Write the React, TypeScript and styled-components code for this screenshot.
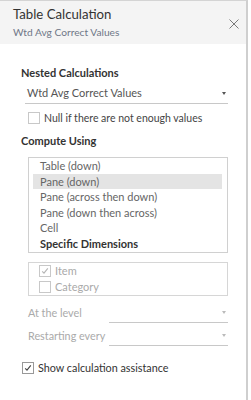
import React from "react";
import styled, { createGlobalStyle } from "styled-components";

const Global = createGlobalStyle`
  html, body { margin: 0; padding: 0; background: #fff; }
  body { font-family: Lato, "Noto Sans", sans-serif; }
`;

const Panel = styled.div`
  width: 248px;
  height: 400px;
  box-sizing: border-box;
  border-top: 1px solid #d4d4d4;
  border-right: 2px solid #cfcfcf;
  background: #fff;
  display: flex;
  flex-direction: column;
`;

const Header = styled.div`
  background: #f4f4f4;
  height: 43px;
  box-sizing: border-box;
  padding: 5px 7px 0 13px;
  display: flex;
  justify-content: space-between;
  align-items: flex-start;
`;

const Titles = styled.div`
  display: flex;
  flex-direction: column;
`;

const Title = styled.div`
  font-size: 13.2px;
  color: #333;
  line-height: 17px;
`;

const Subtitle = styled.div`
  font-size: 10.2px;
  color: #6f7787;
  line-height: 13px;
  margin-top: 3px;
`;

const Close = styled.div`
  margin-top: 7px;
  width: 10px;
  height: 10px;
`;

const Body = styled.div`
  padding: 22px 0 0 21px;
  display: flex;
  flex-direction: column;
`;

const SectionLabel = styled.div`
  font-size: 11px;
  font-weight: 700;
  color: #333;
  line-height: 14px;
`;

const Select = styled.div<{ $muted?: boolean }>`
  display: flex;
  justify-content: space-between;
  align-items: flex-start;
  border-bottom: 1px solid #c8c8c8;
  box-sizing: border-box;
  font-size: 11px;
  line-height: 14px;
  color: ${(p) => (p.$muted ? "#aaa" : "#555")};
  padding: 0 2px 0 2px;
`;

const Arrow = styled.span<{ $muted?: boolean }>`
  margin-top: 6px;
  width: 0;
  height: 0;
  border-left: 2.5px solid transparent;
  border-right: 2.5px solid transparent;
  border-top: 3px solid ${(p) => (p.$muted ? "#bbb" : "#555")};
`;

const NestedSelect = styled(Select)`
  margin: 6px 18px 0 4px;
  height: 18px;
`;

const CheckRow = styled.label<{ $muted?: boolean }>`
  display: flex;
  align-items: center;
  gap: 4px;
  height: 16px;
  font-size: 10.5px;
  color: ${(p) => (p.$muted ? "#aaa" : "#444")};
  line-height: 16px;
  white-space: nowrap;
`;

const Box = styled.span<{ $muted?: boolean }>`
  width: 10px;
  height: 10px;
  border: 1px solid ${(p) => (p.$muted ? "#c8c8c8" : "#999")};
  background: #fff;
  display: inline-flex;
  align-items: center;
  justify-content: center;
  flex: none;
`;

const NullRow = styled(CheckRow)`
  margin: 6px 0 0 7px;
`;

const ComputeLabel = styled(SectionLabel)`
  margin-top: 8px;
`;

const ListBox = styled.div`
  margin: 9px 18px 0 7px;
  border: 1px solid #d0d0d0;
  padding: 0 5px 0 4px;
  display: flex;
  flex-direction: column;
`;

const ListItem = styled.div<{ $selected?: boolean; $bold?: boolean }>`
  height: 15.6px;
  line-height: 15.6px;
  font-size: 11px;
  padding-left: 7px;
  white-space: nowrap;
  color: ${(p) => (p.$bold ? "#333" : "#666")};
  font-weight: ${(p) => (p.$bold ? 700 : 400)};
  background: ${(p) => (p.$selected ? "#e4e4e4" : "transparent")};
`;

const DimBox = styled.div`
  margin: 9px 18px 0 7px;
  border: 1px solid #d6d6d6;
  padding: 0 0 0 10px;
  display: flex;
  flex-direction: column;
`;

const DimRow = styled(CheckRow)`
  font-size: 11px;
`;

const LevelRow = styled.div<{ $gap: number }>`
  margin: ${(p) => p.$gap}px 18px 0 7px;
  display: flex;
  align-items: flex-start;
  height: 18px;
`;

const LevelLabel = styled.div`
  width: 81px;
  font-size: 10.8px;
  color: #aaa;
  line-height: 16px;
  white-space: nowrap;
`;

const LevelSelect = styled(Select)`
  flex: 1;
  height: 18px;
`;

const AssistRow = styled(CheckRow)`
  margin: 14px 0 0 1px;
  font-size: 10.8px;
  color: #333;
`;

const Check = ({ muted }: { muted?: boolean }) => (
  <svg width="8" height="8" viewBox="0 0 8 8">
    <path
      d="M1.2 4.3 L3 6.2 L6.8 1.4"
      fill="none"
      stroke={muted ? "#b5b5b5" : "#444"}
      strokeWidth="1.1"
    />
  </svg>
);

const items = [
  "Table (down)",
  "Pane (down)",
  "Pane (across then down)",
  "Pane (down then across)",
  "Cell",
];

export default function App() {
  return (
    <>
      <Global />
      <Panel>
        <Header>
          <Titles>
            <Title>Table Calculation</Title>
            <Subtitle>Wtd Avg Correct Values</Subtitle>
          </Titles>
          <Close>
            <svg width="10" height="10" viewBox="0 0 10 10">
              <path d="M0.5 0.5 L9.5 9.5 M9.5 0.5 L0.5 9.5" stroke="#7a7a7a" strokeWidth="1" />
            </svg>
          </Close>
        </Header>
        <Body>
          <SectionLabel>Nested Calculations</SectionLabel>
          <NestedSelect>
            Wtd Avg Correct Values
            <Arrow />
          </NestedSelect>
          <NullRow>
            <Box $muted />
            Null if there are not enough values
          </NullRow>
          <ComputeLabel>Compute Using</ComputeLabel>
          <ListBox>
            {items.map((it) => (
              <ListItem key={it} $selected={it === "Pane (down)"}>
                {it}
              </ListItem>
            ))}
            <ListItem $bold>Specific Dimensions</ListItem>
          </ListBox>
          <DimBox>
            <DimRow $muted>
              <Box $muted>
                <Check muted />
              </Box>
              Item
            </DimRow>
            <DimRow $muted>
              <Box $muted />
              Category
            </DimRow>
          </DimBox>
          <LevelRow $gap={9}>
            <LevelLabel>At the level</LevelLabel>
            <LevelSelect $muted>
              <span />
              <Arrow $muted />
            </LevelSelect>
          </LevelRow>
          <LevelRow $gap={5}>
            <LevelLabel>Restarting every</LevelLabel>
            <LevelSelect $muted>
              <span />
              <Arrow $muted />
            </LevelSelect>
          </LevelRow>
          <AssistRow>
            <Box>
              <Check />
            </Box>
            Show calculation assistance
          </AssistRow>
        </Body>
      </Panel>
    </>
  );
}
